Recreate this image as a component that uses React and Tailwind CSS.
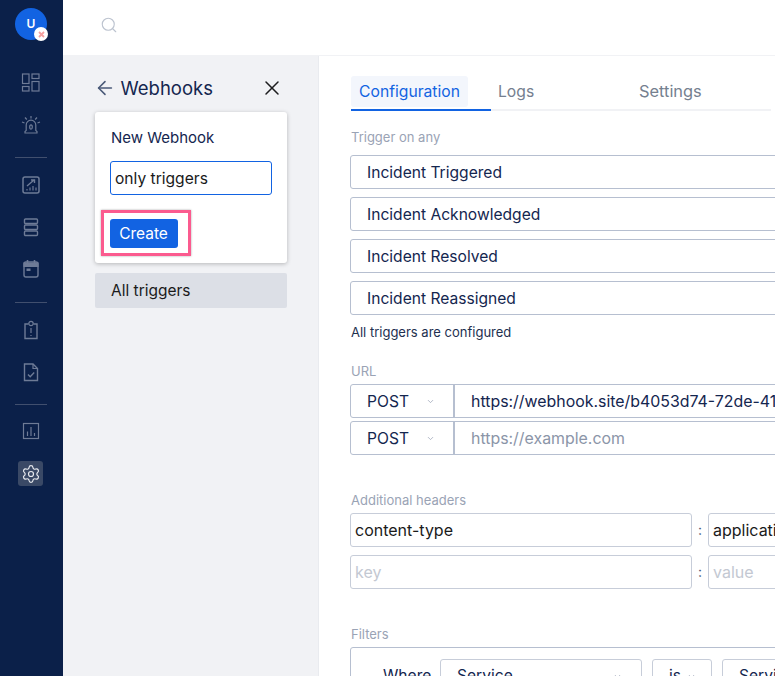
import { ArrowLeft, X, Search, ChevronDown, Settings } from 'lucide-react'

const triggers = ['Incident Triggered', 'Incident Acknowledged', 'Incident Resolved', 'Incident Reassigned']

function NavIcon({ children }) {
  return (
    <div className="flex h-[25px] w-[25px] items-center justify-center rounded-[3px]">
      <svg width="20" height="20" viewBox="0 0 20 20" fill="none" stroke="#6e7b96" strokeWidth="1.2">
        {children}
      </svg>
    </div>
  )
}

function NavDivider({ className }) {
  return <div className={`ml-px h-px w-8 bg-[#414f6e] ${className}`} />
}

function Sidebar() {
  return (
    <div className="flex w-[63px] shrink-0 flex-col items-center bg-[#0b2049] pr-[2px] pt-2">
      <div className="relative mb-[30px] ml-px flex h-8 w-8 items-center justify-center rounded-full bg-[#1263e2] text-xs font-semibold text-white">
        U
        <div className="absolute -bottom-[1px] -right-[1px] flex h-[14px] w-[14px] items-center justify-center rounded-full bg-white">
          <svg width="7" height="7" viewBox="0 0 7 7" stroke="#f4a0a0" strokeWidth="1.8"><path d="M1 1l5 5M6 1L1 6" /></svg>
        </div>
      </div>
      <div className="flex flex-col items-center gap-[17px]">
        <NavIcon>
          <rect x="1.500" y="1" width="6.500" height="9.500" />
          <rect x="1.500" y="13.500" width="6.500" height="4.500" />
          <rect x="11" y="1" width="7" height="4.500" />
          <rect x="11" y="8.500" width="7" height="9.500" />
        </NavIcon>
        <NavIcon>
          <path d="M4 18v-1.500l1.200-1V10a4.800 4.800 0 0 1 9.600 0v5.500l1.200 1V18z" />
          <ellipse cx="10" cy="12" rx="1.300" ry="2.200" />
          <path d="M10 1v2.500M4 2.500l1.800 2M16 2.500l-1.800 2M1 7l2.500 1M19 7l-2.500 1" />
        </NavIcon>
      </div>
      <NavDivider className="mb-[14px] mt-[20px]" />
      <div className="flex flex-col items-center gap-[17px]">
        <NavIcon>
          <rect x="2" y="2" width="16" height="16" rx="2" strokeWidth="1.500" />
          <path d="M6 11l7-6M10 5h3.500v3" strokeWidth="1.400" />
          <path d="M6 15.500v-1.500M9 15.500v-3M12 15.500v-4.500M15 15.500v-3" />
        </NavIcon>
        <NavIcon>
          <rect x="3.500" y="2" width="13" height="4.500" rx="1" strokeWidth="1.400" />
          <rect x="3.500" y="8" width="13" height="4.500" rx="1" strokeWidth="1.400" />
          <rect x="3.500" y="14" width="13" height="4.500" rx="1" strokeWidth="1.400" />
        </NavIcon>
        <NavIcon>
          <path d="M3 5a2 2 0 0 1 2-2h10a2 2 0 0 1 2 2v11a2 2 0 0 1-2 2H5a2 2 0 0 1-2-2z" strokeWidth="1.400" />
          <path d="M3 4h14v3.500H3z" fill="#6e7b96" />
          <path d="M6.500 1v3M13.500 1v3" strokeWidth="1.600" />
          <rect x="5.500" y="9.500" width="4" height="2.500" fill="#6e7b96" stroke="none" />
        </NavIcon>
      </div>
      <NavDivider className="mb-[14px] mt-[21px]" />
      <div className="flex flex-col items-center gap-[17px]">
        <NavIcon>
          <path d="M7.500 4H4v14.500h12V4h-3.500" strokeWidth="1.400" />
          <circle cx="10" cy="3.500" r="2.200" />
          <path d="M10 8v5M10 15v1" />
        </NavIcon>
        <NavIcon>
          <path d="M3.500 2h8.500l4.500 4.500V18.500h-13z" strokeWidth="1.400" />
          <path d="M12 2v4.500h4.500" />
          <path d="M7 12.500l2.200 2.200 4-4.200" strokeWidth="1.400" />
        </NavIcon>
      </div>
      <NavDivider className="mb-[13px] mt-[20px]" />
      <div className="flex flex-col items-center gap-[18px]">
        <NavIcon>
          <rect x="2.500" y="2.500" width="15" height="15" />
          <path d="M6.500 15v-4.500M10 15V6M13.500 15v-3" />
        </NavIcon>
        <div className="flex h-[25px] w-[25px] items-center justify-center rounded-[3px] bg-[#3a4966]">
          <Settings size={20} strokeWidth={1.400} className="text-[#e8eaef]" />
        </div>
      </div>
    </div>
  )
}

function WebhookList() {
  return (
    <div className="w-[256px] shrink-0 border-r border-[#e9ebef] bg-[#f1f2f5] pl-8 pr-[31px] pt-[19px]">
      <div className="mb-[11px] flex h-[26px] items-center">
        <ArrowLeft size={22} strokeWidth={1.700} className="-ml-[1.500px] text-[#4a5a78]" />
        <h2 className="ml-[5px] text-[18.500px] leading-none text-[#14264f]">Webhooks</h2>
        <X size={24} strokeWidth={1.500} className="ml-auto mr-[3px] text-[#1d1d1f]" />
      </div>
      <div className="h-[151px] rounded-[3px] bg-white px-4 pt-[16px] shadow-[0_1px_4px_rgba(0,0,0,0.25)]">
        <p className="text-[15px] leading-5 text-[#14264f]">New Webhook</p>
        <div className="-mx-px mt-[13px] flex h-[34px] items-center rounded-[3px] border border-[#1263e2] bg-white px-1 pt-px text-[15.600px] text-[#1a1a1a]">
          only triggers
        </div>
        <div className="-ml-[10px] mt-[15px] h-[46px] w-[90px] border-[3px] border-[#fb5b8f] pl-[6px] pt-[6px] shadow-[0_0_2px_rgba(0,0,0,0.35)]">
          <button className="h-[29px] w-[68px] rounded-[3px] bg-[#1263e2] pr-px text-[15.500px] text-white">Create</button>
        </div>
      </div>
      <div className="mt-[10px] flex h-[35px] items-center rounded-[2px] bg-[#dcdfe6] pl-4 text-[15.500px] text-[#1a1a1a]">
        All triggers
      </div>
    </div>
  )
}

function Tabs() {
  return (
    <div className="ml-px flex h-[36px] w-[420px] border-b-2 border-[#f1f2f5] leading-none">
      <div className="-mb-[2px] w-[140px] border-b-2 border-[#1263e2] pt-px">
        <div className="flex h-[31px] w-[117px] items-center justify-center rounded-[3px] bg-[#f3f6fc] text-[15.700px] text-[#1263e2]">Configuration</div>
      </div>
      <div className="mt-px flex h-[31px] w-[140px] items-center pl-[7px] text-[15.700px] text-[#75808f]">Logs</div>
      <div className="mt-px flex h-[31px] w-[140px] items-center pl-2 text-[16.400px] text-[#75808f]">Settings</div>
    </div>
  )
}

function FieldLabel({ children }) {
  return <p className="pl-px text-[13px] leading-4 text-[#9aa3b5]">{children}</p>
}

function MethodUrl({ url, placeholder }) {
  return (
    <div className="flex h-[34px] w-[500px] rounded-[3px] border border-[#b6bfd0] bg-white">
      <div className="flex w-[104px] shrink-0 items-center border-r-2 border-[#b6bfd0] pl-4 pt-px text-[15.600px] text-[#14264f]">
        POST
        <ChevronDown size={9} strokeWidth={2} className="ml-[17px] text-[#9aa3b5]" />
      </div>
      <div className={`whitespace-nowrap pl-4 pt-px text-[15.900px] leading-[32px] ${placeholder ? 'text-[#8b95a8]' : 'text-[#14264f]'}`}>
        {url || placeholder}
      </div>
    </div>
  )
}

function HeaderRow({ name, value }) {
  return (
    <div className="flex h-[34px] items-center">
      <div className={`flex h-full w-[342px] shrink-0 items-center rounded-[3px] border border-[#c7cdd9] px-1 text-base ${name ? 'text-[#1a1a1a]' : 'text-[#c3c8d2]'}`}>
        {name || 'key'}
      </div>
      <span className="w-4 shrink-0 text-center text-sm text-[#4a5a78]">:</span>
      <div className={`flex h-full w-[200px] shrink-0 items-center whitespace-nowrap rounded-[3px] border border-[#c7cdd9] px-1 text-base ${value ? 'text-[#1a1a1a]' : 'text-[#c3c8d2]'}`}>
        {value || 'value'}
      </div>
    </div>
  )
}

function Config() {
  return (
    <div className="flex-1 overflow-hidden pl-[31px] pt-[19px]">
      <Tabs />
      <div className="mt-[18px]"><FieldLabel>Trigger on any</FieldLabel></div>
      <div className="mt-[10px] flex w-[500px] flex-col gap-2">
        {triggers.map(t => (
          <div key={t} className="flex h-[34px] items-center rounded-[3px] border border-[#b6bfd0] pl-4 pt-px text-[15.600px] text-[#14264f]">{t}</div>
        ))}
      </div>
      <p className="mt-[9px] pl-px text-[13px] leading-4 text-[#22304f]">All triggers are configured</p>

      <div className="mt-[23px]"><FieldLabel>URL</FieldLabel></div>
      <div className="mt-[5px] flex flex-col gap-[3px]">
        <MethodUrl url="https://webhook.site/b4053d74-72de-41c2-9f10" />
        <MethodUrl placeholder="https://example.com" />
      </div>

      <div className="mt-[37px]"><FieldLabel>Additional headers</FieldLabel></div>
      <div className="mt-[5px] flex flex-col gap-2">
        <HeaderRow name="content-type" value="application/json" />
        <HeaderRow />
      </div>

      <div className="mt-[37px]"><FieldLabel>Filters</FieldLabel></div>
      <div className="mt-[5px] flex h-[80px] w-[500px] items-start rounded-[3px] border border-[#b6bfd0] pl-[32px] pt-[11px] text-[15.600px] text-[#14264f]">
        <span className="flex h-[34px] w-[57px] shrink-0 items-center">Where</span>
        <div className="flex h-[34px] w-[202px] shrink-0 items-center justify-between rounded-[3px] border border-[#c7cdd9] pl-4 pr-[19px]">
          Service<ChevronDown size={9} className="text-[#9aa3b5]" />
        </div>
        <div className="ml-[10px] flex h-[34px] w-[60px] shrink-0 items-center gap-[6px] rounded-[3px] border border-[#c7cdd9] pl-4">
          is<ChevronDown size={9} className="text-[#9aa3b5]" />
        </div>
        <div className="ml-[10px] flex h-[34px] w-[120px] shrink-0 items-center rounded-[3px] border border-[#c7cdd9] pl-4">Service</div>
      </div>
    </div>
  )
}

export default function App() {
  return (
    <div className="flex h-[676px] w-[775px] overflow-hidden bg-white font-['Inter',sans-serif]">
      <Sidebar />
      <div className="flex min-w-0 flex-1 flex-col">
        <div className="flex h-[56px] shrink-0 items-center border-b border-[#f1f2f5] pl-[36.500px]">
          <Search size={18} strokeWidth={1.500} className="-mt-[5px] text-[#bcc3cf]" />
        </div>
        <div className="flex min-h-0 flex-1">
          <WebhookList />
          <Config />
        </div>
      </div>
    </div>
  )
}
